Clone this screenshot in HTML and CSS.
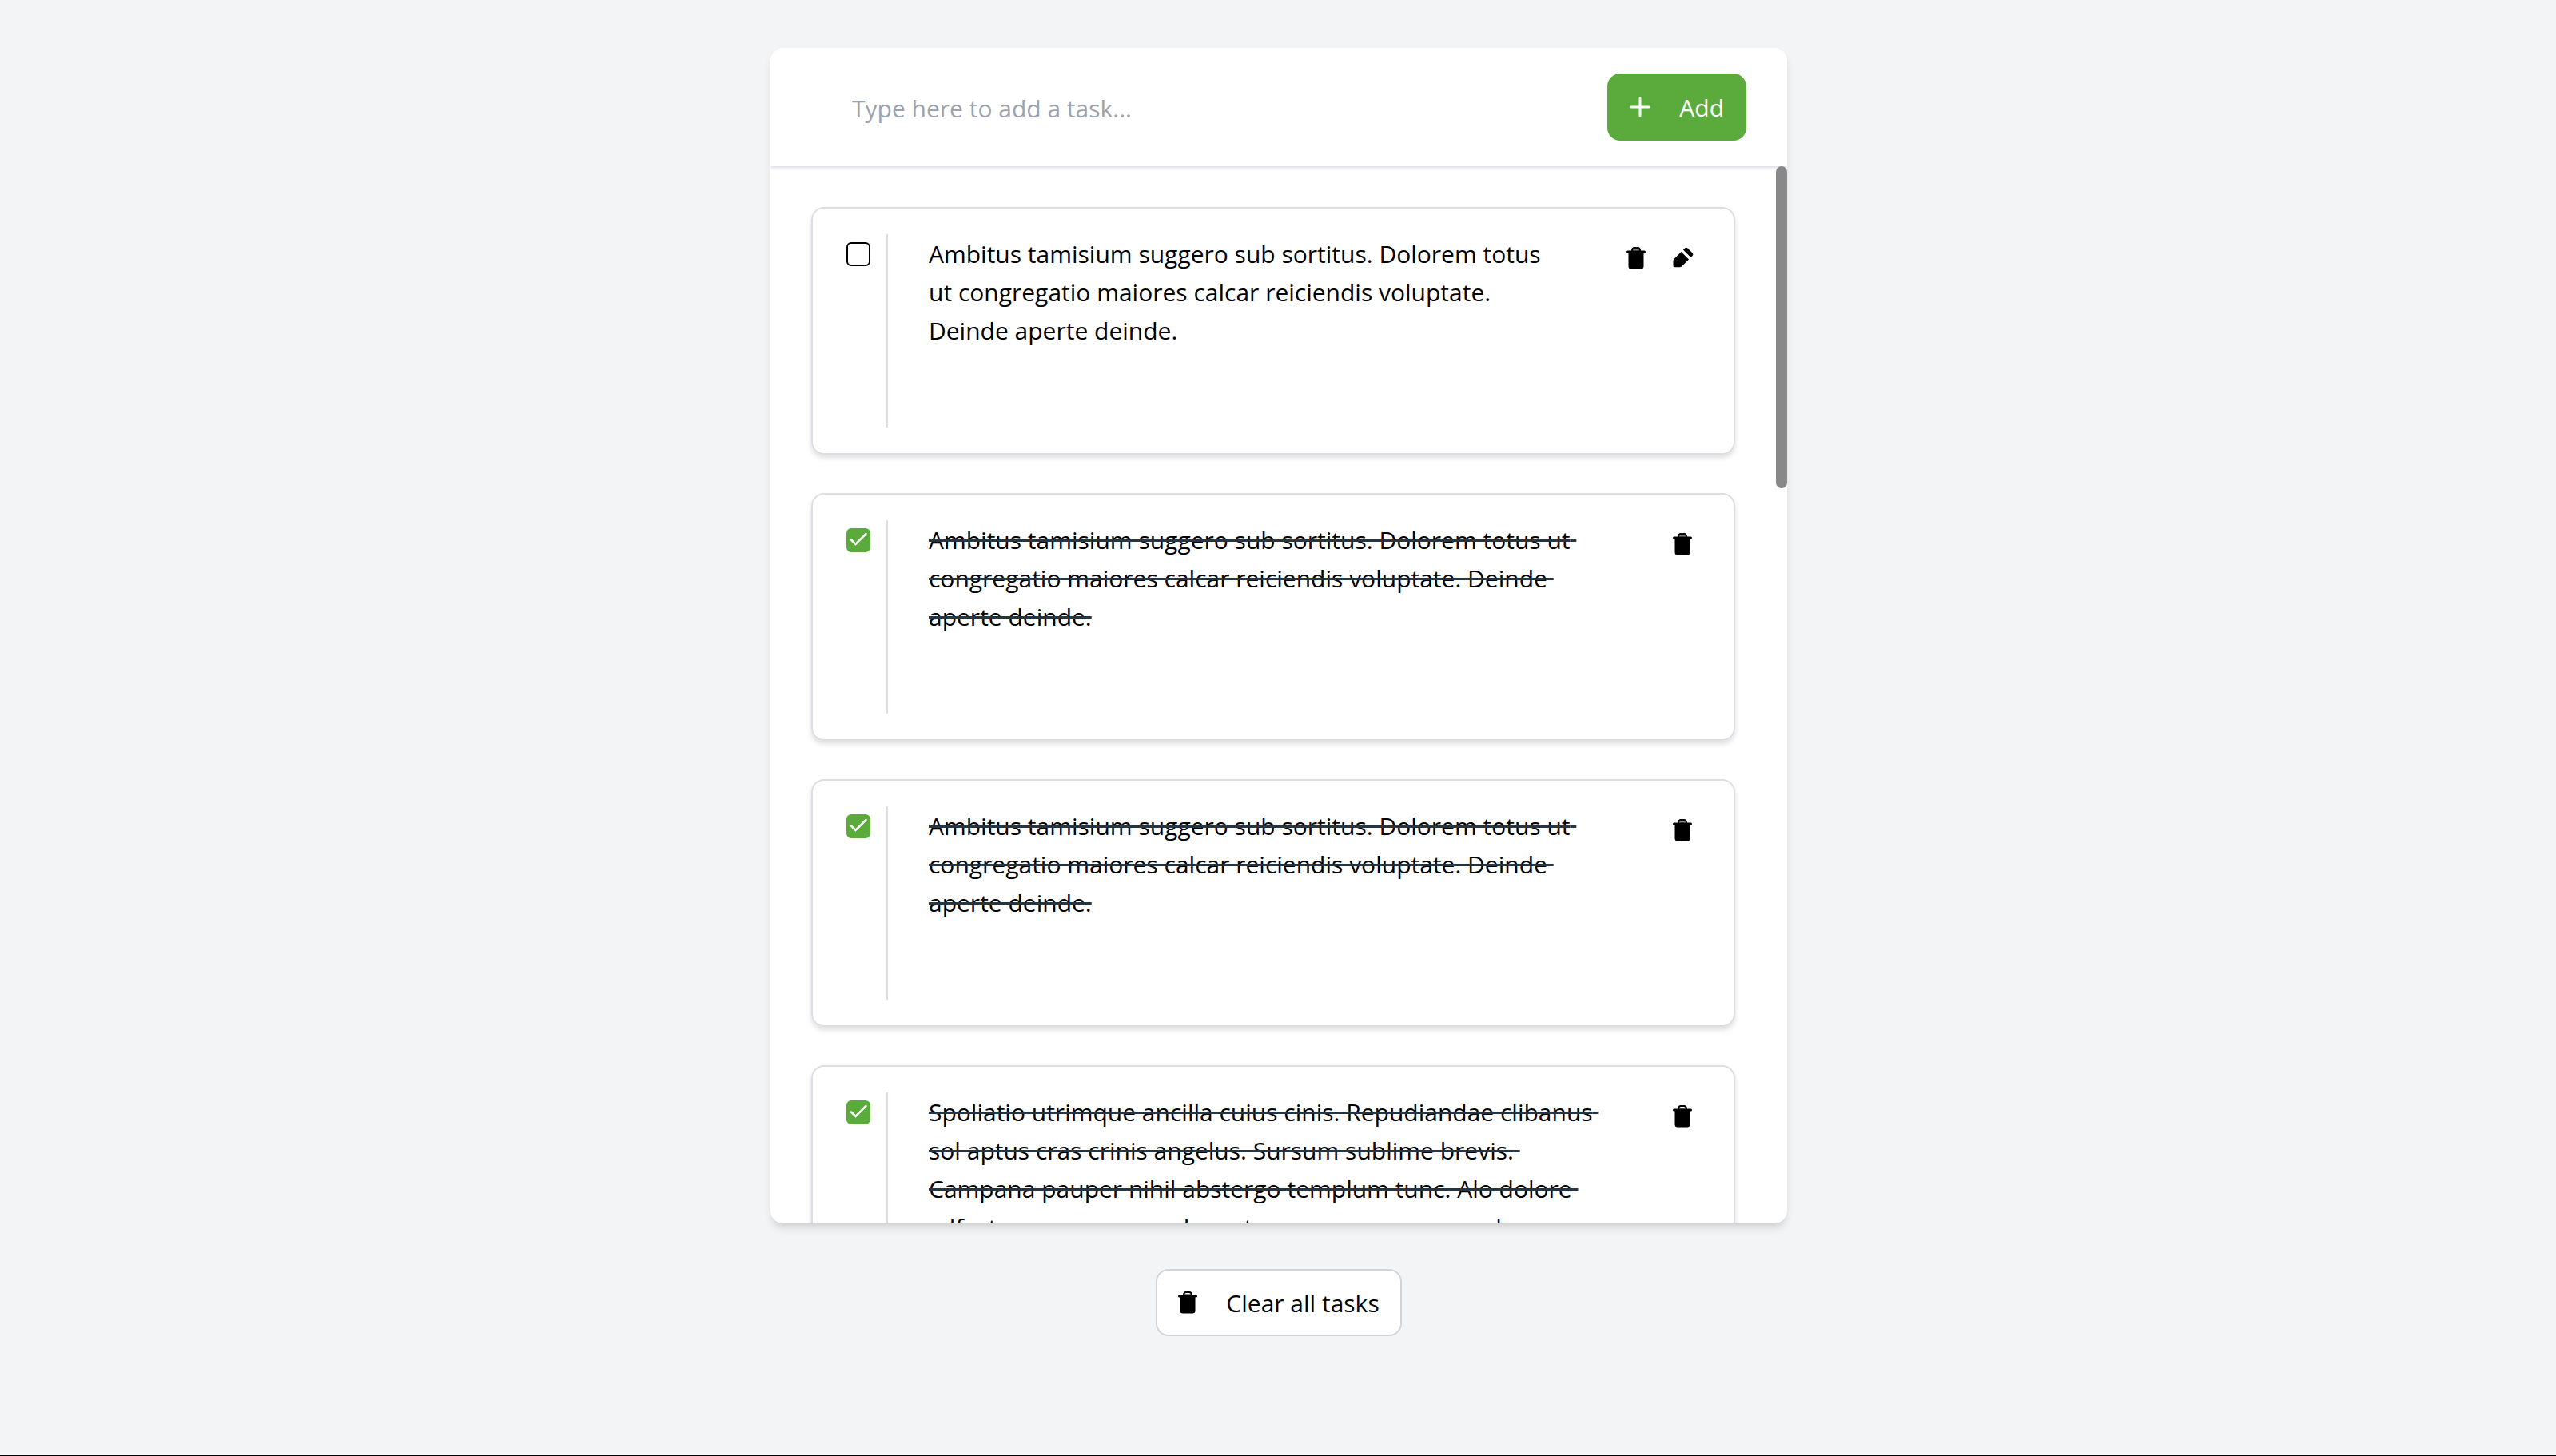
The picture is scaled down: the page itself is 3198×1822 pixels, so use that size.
FILE: index.html
```html
<!DOCTYPE html>
<html lang="en">
<head>
<meta charset="utf-8">
<meta name="viewport" content="width=device-width, initial-scale=1">
<title>Tasks</title>
<link rel="stylesheet" href="styles.css">
</head>
<body>
<svg class="sprite" aria-hidden="true">
  <symbol id="trash" viewBox="0 0 24 28">
    <path d="M7 5.500V4.500Q7 1 10 1H14Q17 1 17 4.500V5.500" fill="none" stroke="currentColor" stroke-width="2"/>
    <path d="M8 3H16V5H8Z" opacity=".5"/>
    <rect x="0" y="4.500" width="24" height="3" rx="1.500"/>
    <path d="M2.500 6H21.500V24Q21.500 27.500 18 27.500H6Q2.500 27.500 2.500 24Z"/>
  </symbol>
  <symbol id="pencil" viewBox="0 0 26 26">
    <path d="M10.500 6L20 15.500L11.500 24Q10.300 25.200 8.500 25.200H2Q.5 25.200 .5 23.500V17.500Q.5 16 1.500 15Z"/>
    <path d="M13 3.500L14.800 1.700Q16.800 -.3 18.800 1.700L24.300 7.200Q26.300 9.200 24.300 11.200L22.500 13Z"/>
  </symbol>
</svg>
<main class="page">
  <section class="panel" aria-label="Tasks">
    <form class="composer">
      <input class="composer-input" type="text" aria-label="New task" placeholder="Type here to add a task...">
      <button class="button button-primary" type="button">
        <svg class="icon-plus" viewBox="0 0 26 26" aria-hidden="true"><path d="M13 2V24M2 13H24" stroke="currentColor" stroke-width="3" stroke-linecap="round"/></svg>
        <span class="button-label">Add</span>
      </button>
    </form>
    <div class="scroller">
      <ul class="tasks">
        <li class="task">
          <div class="task-check"><input class="checkbox" type="checkbox" id="task-1"></div>
          <label class="task-text" for="task-1">Ambitus tamisium suggero sub sortitus. Dolorem totus ut congregatio maiores calcar reiciendis voluptate. Deinde aperte deinde.</label>
          <div class="task-actions">
            <button class="icon-button" type="button" aria-label="Delete task"><svg class="icon-trash"><use href="#trash"/></svg></button>
            <button class="icon-button" type="button" aria-label="Edit task"><svg class="icon-pencil"><use href="#pencil"/></svg></button>
          </div>
        </li>
        <li class="task">
          <div class="task-check"><input class="checkbox" type="checkbox" id="task-2" checked></div>
          <label class="task-text" for="task-2"><span class="done">Ambitus tamisium suggero sub sortitus. Dolorem totus ut congregatio maiores calcar reiciendis voluptate. Deinde aperte deinde.</span></label>
          <div class="task-actions">
            <button class="icon-button" type="button" aria-label="Delete task"><svg class="icon-trash"><use href="#trash"/></svg></button>
          </div>
        </li>
        <li class="task">
          <div class="task-check"><input class="checkbox" type="checkbox" id="task-3" checked></div>
          <label class="task-text" for="task-3"><span class="done">Ambitus tamisium suggero sub sortitus. Dolorem totus ut congregatio maiores calcar reiciendis voluptate. Deinde aperte deinde.</span></label>
          <div class="task-actions">
            <button class="icon-button" type="button" aria-label="Delete task"><svg class="icon-trash"><use href="#trash"/></svg></button>
          </div>
        </li>
        <li class="task">
          <div class="task-check"><input class="checkbox" type="checkbox" id="task-4" checked></div>
          <label class="task-text" for="task-4"><span class="done">Spoliatio utrimque ancilla cuius cinis. Repudiandae clibanus sol aptus cras crinis angelus. Sursum sublime brevis. Campana pauper nihil abstergo templum tunc. Alo dolore 
 olfactus amor cursus desunt conor arceo usque ad suggero.</span></label>
          <div class="task-actions">
            <button class="icon-button" type="button" aria-label="Delete task"><svg class="icon-trash"><use href="#trash"/></svg></button>
          </div>
        </li>
      </ul>
      <div class="scroll-track" aria-hidden="true"><div class="scroll-thumb"></div></div>
    </div>
  </section>
  <button class="button button-outline" type="button">
    <svg class="icon-trash" aria-hidden="true"><use href="#trash"/></svg>
    <span class="button-label">Clear all tasks</span>
  </button>
</main>
</body>
</html>
```
FILE: styles.css
```css
*, *::before, *::after { box-sizing: border-box; }

body {
  margin: 0;
  background: #f3f4f6;
  color: #000;
  font: 30px/48px "Segoe UI", "Open Sans", "Noto Sans", sans-serif;
}

button, input { font: inherit; }
button { cursor: pointer; }

.sprite { display: none; }

.page {
  display: flex;
  flex-direction: column;
  align-items: center;
  gap: 57px;
  height: 100vh;
  padding: 60px 24px 149px 26px;
  border-bottom: 1px solid #000;
}

.panel {
  display: flex;
  flex-direction: column;
  flex: 1;
  min-height: 0;
  width: 100%;
  max-width: 1272px;
  overflow: hidden;
  border-radius: 16px;
  background: #fff;
  box-shadow: 0 8px 12px -2px rgba(0, 0, 0, .1), 0 4px 8px -4px rgba(0, 0, 0, .1);
}

.composer {
  display: flex;
  gap: 32px;
  padding: 32px 51px;
  box-shadow: 0 2px 4px rgba(50, 40, 90, .18);
}

.composer-input {
  flex: 1;
  min-width: 0;
  padding: 4px 51px 0;
  border: 0;
  outline: 0;
  background: none;
}
.composer-input::placeholder { color: #9ca3af; opacity: 1; }

.button {
  display: flex;
  align-items: center;
  gap: 36px;
  height: 84px;
  padding: 0 26px;
  border: 2px solid transparent;
  border-radius: 16px;
}
.button-label { padding-top: 2px; }
.button-primary { background: #5bab3c; color: #fff; }
.button-outline { border-color: #d4d4d4; background: #fff; color: #000; }

.scroller {
  display: flex;
  flex: 1;
  min-height: 0;
}

.tasks {
  display: flex;
  flex-direction: column;
  gap: 48px;
  flex: 1;
  min-width: 0;
  margin: 0;
  padding: 51px;
  overflow-y: auto;
  scrollbar-width: none;
  list-style: none;
}

.scroll-track { flex: none; width: 14px; }
.scroll-thumb {
  height: 403px;
  border-radius: 7px;
  background: #888;
}

.task {
  display: flex;
  flex: none;
  min-height: 310px;
  padding: 32px 42px;
  border: 2px solid #dedde4;
  border-radius: 16px;
  box-shadow: 0 4px 6px rgba(0, 0, 0, .13);
}

.task-check {
  flex: none;
  padding: 10px 20px 0 0;
  border-right: 2px solid #dedde4;
}

.checkbox {
  display: block;
  width: 30px;
  height: 30px;
  margin: 0;
  appearance: none;
  border: 2px solid #000;
  border-radius: 6px;
}
.checkbox:checked {
  border-color: #5bab3c;
  background: #5bab3c url('data:image/svg+xml,<svg xmlns="http://www.w3.org/2000/svg" viewBox="0 0 26 26"><path d="M4 12.500L9.500 18L22.500 5" fill="none" stroke="white" stroke-width="2.500" stroke-linecap="round"/></svg>');
}

.task-text {
  flex: 1;
  min-width: 0;
  padding: 1px 50px 0 51px;
  white-space: pre-wrap;
}
.done { text-decoration: line-through 3px #263544; }

.task-actions {
  display: flex;
  flex: none;
  align-items: flex-start;
  gap: 30px;
  padding: 16px 6px 0 30px;
}

.icon-button {
  display: flex;
  min-width: 28px;
  padding: 0;
  border: 0;
  background: none;
  color: #000;
}

.icon-plus { width: 26px; height: 26px; }
.icon-trash { width: 24px; height: 28px; fill: currentColor; }
.icon-pencil { width: 26px; height: 26px; fill: currentColor; }
```
